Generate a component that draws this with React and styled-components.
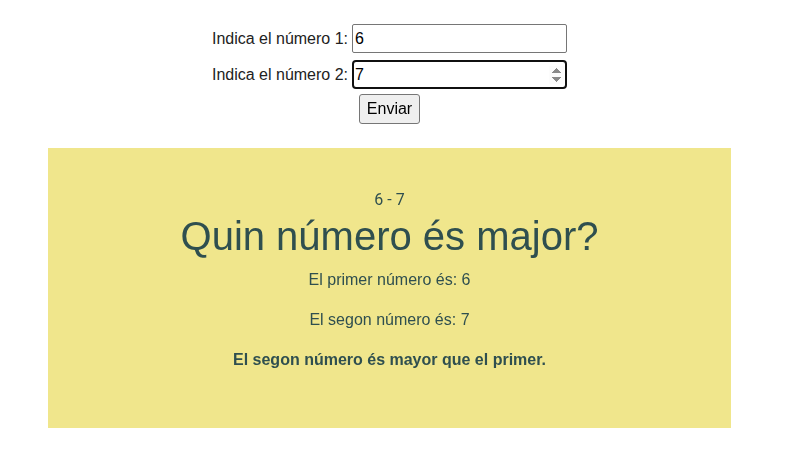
import React, { useState } from "react";
import styled, { createGlobalStyle } from "styled-components";

const GlobalStyle = createGlobalStyle`
  body {
    margin: 8px;
    background: #fff;
    font-family: "Liberation Sans", Arial, sans-serif;
  }
`;

const Page = styled.div`
  width: 683px;
  margin-left: 40px;
`;

const Form = styled.form`
  display: flex;
  flex-direction: column;
  align-items: center;
  padding-top: 16px;
`;

const Row = styled.div`
  display: flex;
  align-items: center;
  gap: 4px;
  margin-bottom: ${(p) => p.$gap || 0}px;
`;

const Label = styled.label`
  font-size: 16px;
  color: #222;
`;

const Input = styled.input`
  box-sizing: border-box;
  width: 215px;
  height: 29px;
  padding: 1px 2px;
  font-family: "Liberation Sans", Arial, sans-serif;
  font-size: 16px;
  color: #000;
  border: 1px solid #767676;
  border-radius: 2px;
`;

const Button = styled.button`
  font-family: "Liberation Sans", Arial, sans-serif;
  font-size: 16px;
  height: 30px;
  padding: 1px 7px;
  color: #000;
  background: #efefef;
  border: 1px solid #767676;
  border-radius: 3px;
`;

const Result = styled.section`
  margin-top: 24px;
  height: 280px;
  box-sizing: border-box;
  padding-top: 42px;
  background: #f0e68c;
  color: #2f4f4f;
  text-align: center;
`;

const Pair = styled.div`
  font-family: Roboto, sans-serif;
  font-size: 16px;
  line-height: 20px;
`;

const Title = styled.h1`
  margin: 0;
  font-size: 40px;
  font-weight: normal;
  line-height: 53px;
`;

const Line = styled.p`
  margin: 0;
  font-size: 16px;
  line-height: 34px;
  font-weight: ${(p) => (p.$strong ? "bold" : "normal")};
  & + & {
    margin-top: 6px;
  }
`;

export default function App() {
  const [a, setA] = useState("6");
  const [b, setB] = useState("7");

  const verdict =
    Number(a) > Number(b)
      ? "El primer número és mayor que el segon."
      : Number(b) > Number(a)
      ? "El segon número és mayor que el primer."
      : "Els dos números són iguals.";

  return (
    <Page>
      <GlobalStyle />
      <Form onSubmit={(e) => e.preventDefault()}>
        <Row $gap={7}>
          <Label htmlFor="n1">Indica el número 1:</Label>
          <Input id="n1" type="number" value={a} onChange={(e) => setA(e.target.value)} />
        </Row>
        <Row $gap={5}>
          <Label htmlFor="n2">Indica el número 2:</Label>
          <Input id="n2" type="number" autoFocus value={b} onChange={(e) => setB(e.target.value)} />
        </Row>
        <Button type="submit">Enviar</Button>
      </Form>
      <Result>
        <Pair>
          {a} - {b}
        </Pair>
        <Title>Quin número és major?</Title>
        <Line>El primer número és: {a}</Line>
        <Line>El segon número és: {b}</Line>
        <Line $strong>{verdict}</Line>
      </Result>
    </Page>
  );
}
